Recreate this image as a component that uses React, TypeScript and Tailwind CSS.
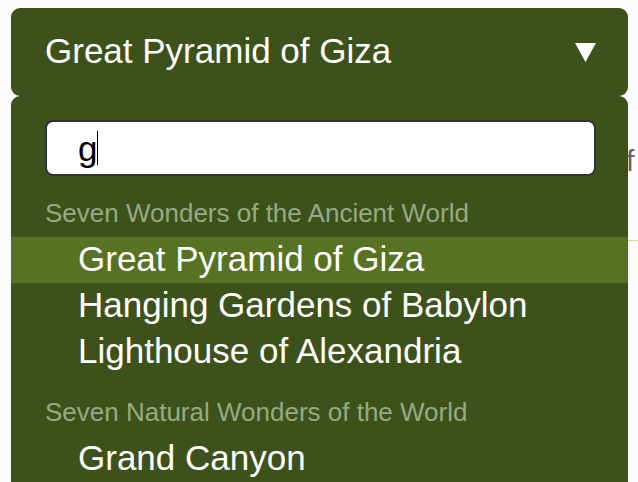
import React from "react";

const ff = { fontFamily: '"Liberation Sans", Arial, sans-serif' };

export default function App() {
  const groups = [
    {
      label: "Seven Wonders of the Ancient World",
      items: ["Great Pyramid of Giza", "Hanging Gardens of Babylon", "Lighthouse of Alexandria"],
    },
    { label: "Seven Natural Wonders of the World", items: ["Grand Canyon"] },
  ];
  return (
    <div className="relative w-[638px] h-[482px] overflow-hidden bg-[#fbfbfb]" style={ff}>
      <span className="absolute left-[626px] top-[141px] text-[30px] leading-[40px] text-[#666]">f</span>
      <div className="absolute left-[628px] top-[240px] w-[10px] h-px bg-[#d8d890]" />
      <div className="pt-2 pl-[11px] w-[628px]">
        <div className="h-[88px] rounded-[9px] bg-[#3d511a] flex items-center justify-between pl-[34px] pr-[32px]">
          <span className="text-[35px] leading-none text-white pb-[4px]">Great Pyramid of Giza</span>
          <svg width="21" height="19" viewBox="0 0 21 19">
            <polygon points="0,0 21,0 10.5,19" fill="#fff" />
          </svg>
        </div>
      </div>
      <div className="absolute left-[11px] top-[96px] w-[617px] h-[400px] rounded-t-[9px] bg-[#3d511a] pt-6">
        <div className="ml-[34px] mr-[32px] h-[56px] rounded-[8px] bg-white border-2 border-[#333] flex items-center pl-[31px]">
          <span className="text-[35px] leading-none text-black">g</span>
          <span className="w-px h-[34px] bg-black" />
        </div>
        {groups.map((g) => (
          <div key={g.label}>
            <div className="pt-6 pb-[11px] pl-[34px] text-[26px] leading-[26px] text-[#97aa83]">{g.label}</div>
            {g.items.map((it) => (
              <div
                key={it}
                className={
                  "h-[46px] flex items-center pl-[67px] pb-[4px] text-[35px] leading-none text-white " +
                  (it === "Great Pyramid of Giza" ? "bg-[#587223]" : "")
                }
              >
                {it}
              </div>
            ))}
          </div>
        ))}
      </div>
    </div>
  );
}
